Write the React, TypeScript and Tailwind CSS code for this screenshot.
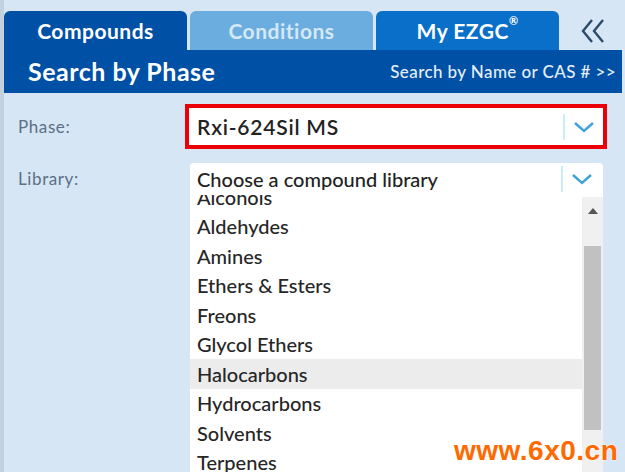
import React from 'react';

const items = [
  'Alcohols',
  'Aldehydes',
  'Amines',
  'Ethers & Esters',
  'Freons',
  'Glycol Ethers',
  'Halocarbons',
  'Hydrocarbons',
  'Solvents',
  'Terpenes',
];

const Chevron: React.FC = () => (
  <div className="flex items-center h-full">
    <div className="w-[2px] h-[26px] bg-[#c9eefb]" />
    <svg width="38" height="20" viewBox="0 0 38 20">
      <path d="M10 6 L19 14 L28 6" fill="none" stroke="#3da2d9" strokeWidth="2.4" />
    </svg>
  </div>
);

const App: React.FC = () => {
  return (
    <div
      className="relative w-[625px] h-[472px] overflow-hidden bg-[#d6e6f4] border-l-[4px] border-[#c3d2de]"
      style={{ fontFamily: 'Lato, "Open Sans", sans-serif' }}
    >
      {/* tabs */}
      <div className="flex items-end pt-[11px] h-[50px] gap-[3px]">
        <div className="w-[183px] h-[39px] rounded-t-[6px] bg-[#0051a5] text-white font-bold text-[21px] tracking-[0.5px] flex items-center justify-center">
          Compounds
        </div>
        <div className="w-[183px] h-[39px] rounded-t-[6px] bg-[#6badde] text-[#d4e8f7] font-bold text-[21px] tracking-[0.5px] flex items-center justify-center">
          Conditions
        </div>
        <div className="w-[183px] h-[39px] rounded-t-[6px] bg-[#0a6fc9] text-white font-bold text-[21px] tracking-[0.5px] flex items-center justify-center">
          My EZGC<sup className="text-[11px] -mt-[8px]">®</sup>
        </div>
        <div className="flex-1 h-[39px] flex items-center justify-center">
          <svg width="30" height="26" viewBox="0 0 30 26">
            <path d="M13 2 L4 13 L13 24 M24 2 L15 13 L24 24" fill="none" stroke="#2c4a6c" strokeWidth="2.4" />
          </svg>
        </div>
      </div>

      {/* header bar */}
      <div className="h-[43px] mr-[3px] bg-[#0051a5] flex items-center justify-between pl-[24px] pr-[6px]">
        <span className="text-white font-bold text-[25px] tracking-[0.5px]">Search by Phase</span>
        <span className="text-[#e6eef8] text-[17px] font-medium tracking-[0.4px]">Search by Name or CAS # &gt;&gt;</span>
      </div>

      {/* form */}
      <div className="pt-[11px]">
        <div className="flex items-center h-[45px]">
          <div className="w-[181px] pl-[14px] text-[17px] tracking-[0.6px] text-[#5b6f87]">Phase:</div>
          <div className="w-[422px] h-[45px] border-[4px] border-[#ec0008] bg-white flex items-center justify-between pl-[8px]">
            <span className="text-[21px] tracking-[0.8px] text-[#222] font-semibold">Rxi-624Sil MS</span>
            <Chevron />
          </div>
        </div>

        <div className="flex mt-[14px]">
          <div className="w-[186px] pl-[14px] pt-[3px] text-[17px] tracking-[0.6px] text-[#5b6f87]">Library:</div>
          <div className="w-[413px] h-[310px] bg-white rounded-t-[4px] flex flex-col">
            <div className="h-[32px] flex items-center justify-between pl-[7px] pr-[2px]">
              <span className="text-[20px] text-[#222] font-medium">Choose a compound library</span>
              <Chevron />
            </div>
            <div className="flex flex-1 overflow-hidden">
              <div className="flex-1 overflow-hidden">
                <div className="-mt-[13px]">
                  {items.map((it) => (
                    <div
                      key={it}
                      className={`h-[29.5px] flex items-center pl-[7px] text-[20px] text-[#262626] font-medium ${
                        it === 'Halocarbons' ? 'bg-[#ececec]' : ''
                      }`}
                    >
                      {it}
                    </div>
                  ))}
                </div>
              </div>
              <div className="w-[21px] mt-[2px] bg-[#f0f0f0] flex flex-col items-center">
                <svg width="10" height="6" viewBox="0 0 10 6" className="mt-[11px]">
                  <path d="M0 6 L5 0 L10 6 Z" fill="#555" />
                </svg>
                <div className="w-[17px] h-[184px] mt-[32px] bg-[#c1c1c1]" />
              </div>
            </div>
          </div>
        </div>
      </div>

      <div
        className="absolute left-[450px] top-[430px] text-[#ff6a00] text-[28px] font-bold tracking-[0.5px]"
        style={{ fontFamily: '"Liberation Sans", Arial, sans-serif', textShadow: '0 0 2px #fff, 0 0 2px #fff' }}
      >
        www.6x0.cn
      </div>
    </div>
  );
};

export default App;
